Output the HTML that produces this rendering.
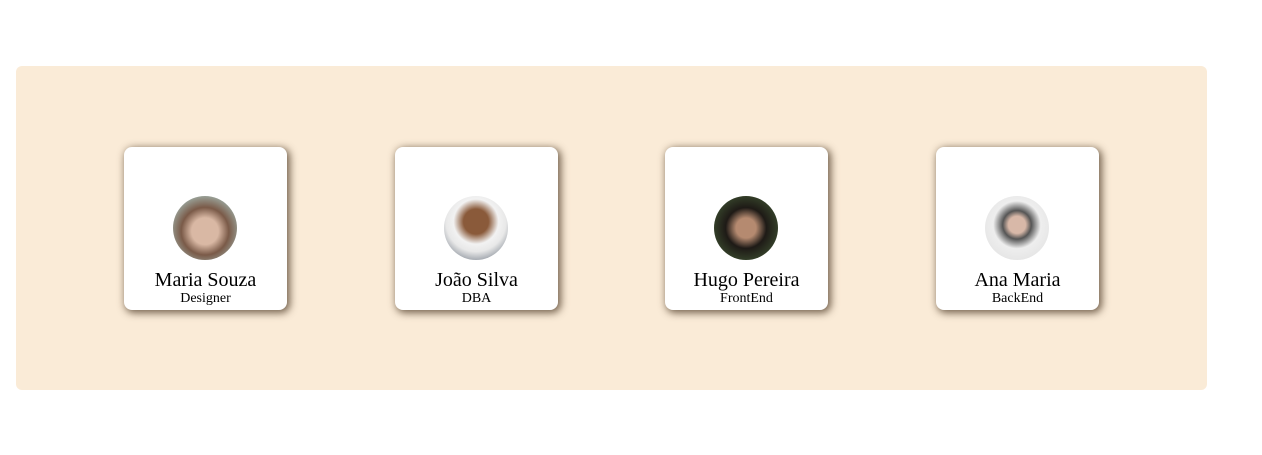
<!DOCTYPE html>
<html><head><style>
body{margin:0;background:#fff;width:1262px;height:455px;overflow:hidden;font-family:"Liberation Serif",serif;}
.panel{position:absolute;left:16px;top:66px;width:1191px;height:324px;background:#faebd7;border-radius:6px;}
.card{position:absolute;top:147px;width:163px;height:163px;background:#fff;border-radius:8px;box-shadow:2px 2px 8px 1px rgba(60,40,20,.7);text-align:center;}
.av{position:absolute;left:49px;top:49px;width:64px;height:64px;border-radius:50%;}
.n{position:absolute;left:0;right:0;top:122px;font-size:20px;line-height:23px;color:#000;}
.r{position:absolute;left:0;right:0;top:144px;font-size:14px;line-height:16px;color:#000;}
</style></head><body>
<div class="panel"></div>
<div class="card" style="left:124px"><div class="av" style="background:radial-gradient(circle at 50% 55%,#d9b8a4 0 28%,#7a5a48 50%,#9aa39a 75%)"></div><div class="n">Maria Souza</div><div class="r">Designer</div></div>
<div class="card" style="left:395px"><div class="av" style="background:radial-gradient(circle at 50% 40%,#8a5a3a 0 25%,#f2f2f2 45%,#e8e8e8 60%,#9aa0a8 80%)"></div><div class="n">João Silva</div><div class="r">DBA</div></div>
<div class="card" style="left:665px"><div class="av" style="background:radial-gradient(circle at 50% 50%,#b58a70 0 22%,#1e1a16 45%,#3a4a2e 80%)"></div><div class="n">Hugo Pereira</div><div class="r">FrontEnd</div></div>
<div class="card" style="left:936px"><div class="av" style="background:radial-gradient(circle at 50% 45%,#d8b8a8 0 18%,#555 30%,#eeeeee 50%,#e4e4e4 80%)"></div><div class="n">Ana Maria</div><div class="r">BackEnd</div></div>
</body></html>
